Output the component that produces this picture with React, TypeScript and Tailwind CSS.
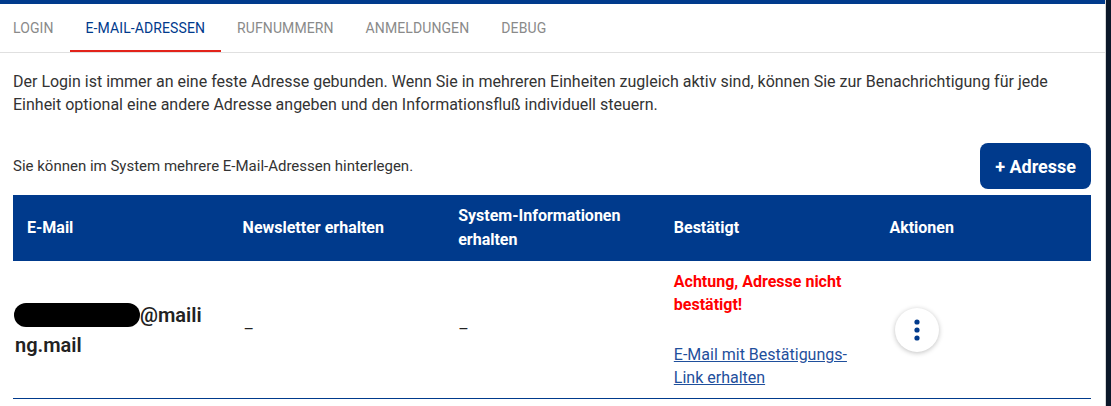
import React from 'react';

const tabs = ['Login', 'E-Mail-Adressen', 'Rufnummern', 'Anmeldungen', 'Debug'];

function KebabButton() {
  return (
    <button className="w-[44px] h-[44px] rounded-full bg-white shadow-[0_1px_5px_rgba(0,0,0,0.25)] flex items-center justify-center">
      <svg width="6" height="22" viewBox="0 0 6 22" fill="#003a8c">
        <circle cx="3" cy="3" r="2.6" />
        <circle cx="3" cy="11" r="2.6" />
        <circle cx="3" cy="19" r="2.6" />
      </svg>
    </button>
  );
}

export default function App() {
  return (
    <div className="flex w-[1111px] h-[406px] overflow-hidden bg-[#0b1729] font-['Roboto','Liberation_Sans',sans-serif]">
      <div className="w-[1106px] shrink-0 bg-white border-r border-[#d6d6d6] flex flex-col">
        {/* top bar */}
        <div className="h-[4px] bg-[#003a8c]" />

        {/* Tabs */}
        <div className="h-[49px] border-b border-[#e0e0e0] flex items-stretch">
          {tabs.map((t, i) => (
            <div
              key={t}
              className={`flex items-center text-[14px] uppercase tracking-[0.1px] border-b-2 ${
                i === 0 ? 'pl-[13px] pr-[16px]' : 'px-[16px]'
              } ${i === 1 ? 'text-[#003a8c] border-[#e2231a]' : 'text-[#8a8a8a] border-transparent'}`}
            >
              <span className="mt-[2px]">{t}</span>
            </div>
          ))}
        </div>

        {/* Intro */}
        <p className="px-[13px] pt-[17px] text-[16px] leading-[23px] text-[#333]">
          Der Login ist immer an eine feste Adresse gebunden. Wenn Sie in mehreren Einheiten zugleich aktiv sind, können Sie zur Benachrichtigung für jede Einheit optional eine andere Adresse angeben und den Informationsfluß individuell steuern.
        </p>

        {/* toolbar */}
        <div className="mt-[27px] ml-[13px] w-[1078px] flex items-center justify-between">
          <span className="text-[15px] text-[#333]">Sie können im System mehrere E-Mail-Adressen hinterlegen.</span>
          <button className="h-[46px] px-[15px] rounded-[8px] bg-[#003a8c] text-white text-[18px] font-bold">
            + Adresse
          </button>
        </div>

        {/* Table */}
        <div className="mt-[6px] ml-[13px] w-[1078px]">
          <div className="grid grid-cols-5 h-[66px] bg-[#003a8c] text-white text-[16px] font-bold leading-[24px]">
            <div className="px-[14px] flex items-center">E-Mail</div>
            <div className="px-[14px] flex items-center">Newsletter erhalten</div>
            <div className="px-[14px] flex items-center">System-Informationen<br />erhalten</div>
            <div className="px-[14px] flex items-center">Bestätigt</div>
            <div className="px-[14px] flex items-center">Aktionen</div>
          </div>

          <div className="grid grid-cols-5 h-[138px] border-b border-[#003a8c] text-[#222]">
            <div className="px-[1px] flex items-center">
              <div className="text-[20px] font-semibold leading-[30px]">
                <span className="inline-block w-[126px] h-[24px] rounded-full bg-black align-[-5px]" />
                <span>@maili</span>
                <br />
                <span className="ml-[1px]">ng.mail</span>
              </div>
            </div>
            <div className="px-[15px] flex items-center text-[16px] pt-[1px]">–</div>
            <div className="px-[14px] flex items-center text-[16px] pt-[1px]">–</div>
            <div className="px-[14px] flex flex-col justify-center">
              <div className="text-[16px] font-bold leading-[23px] text-[#ff0000]">
                Achtung, Adresse nicht<br />bestätigt!
              </div>
              <a className="mt-[27px] text-[16px] leading-[23px] text-[#1f4f9c] underline">
                E-Mail mit Bestätigungs-<br />Link erhalten
              </a>
            </div>
            <div className="pl-[20px] flex items-center">
              <KebabButton />
            </div>
          </div>
        </div>
      </div>
      <div className="flex-1" />
    </div>
  );
}
